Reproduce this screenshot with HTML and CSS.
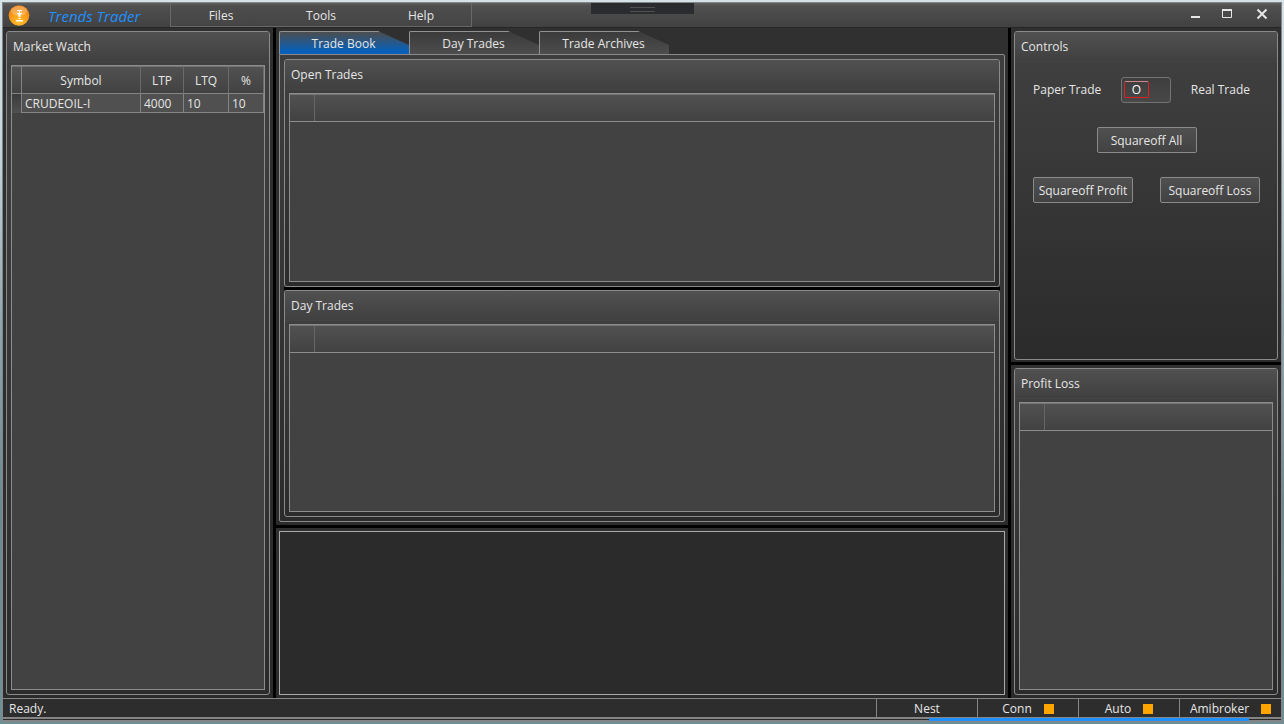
FILE: index.html
```html
<!DOCTYPE html>
<html lang="en">
<head>
<meta charset="utf-8">
<title>Trends Trader</title>
<link rel="stylesheet" href="styles.css">
</head>
<body>
<div class="window">
  <header class="titlebar">
    <svg class="logo" width="22" height="22" viewBox="0 0 22 22" aria-hidden="true">
      <defs>
        <radialGradient id="orb" cx="50%" cy="80%" r="75%">
          <stop offset="0" stop-color="#ffc02e"/>
          <stop offset="0.6" stop-color="#fb9a18"/>
          <stop offset="1" stop-color="#ee7d10"/>
        </radialGradient>
      </defs>
      <circle cx="11" cy="10.500" r="10.300" fill="url(#orb)"/>
      <ellipse cx="11" cy="6" rx="8" ry="5" fill="#fff" opacity="0.25"/>
      <path d="M9 5.500h5M11.500 5v3" fill="none" stroke="#fff"/>
      <path d="M8.500 8h6l-2 2v2h-2v-2zM10.500 13h2v1h-2zM8 15h7v1.500H8z" fill="#fff"/>
    </svg>
    <h1 class="brand">Trends Trader</h1>
    <nav class="menu">
      <button class="menu-item">Files</button>
      <button class="menu-item">Tools</button>
      <button class="menu-item">Help</button>
    </nav>
    <div class="window-buttons">
      <button class="window-button" aria-label="Minimize"><svg width="12" height="12" viewBox="0 0 12 12"><path d="M1 9h9" stroke="#e6e6e6" stroke-width="2"/></svg></button>
      <button class="window-button" aria-label="Maximize"><svg width="12" height="12" viewBox="0 0 12 12"><path d="M1.500 2v7.500h9V2z" fill="none" stroke="#e6e6e6"/><path d="M1 2h10" stroke="#e6e6e6" stroke-width="2"/></svg></button>
      <button class="window-button" aria-label="Close"><svg width="12" height="12" viewBox="0 0 12 12"><path d="M1.500 1.500l9 9M10.500 1.500l-9 9" stroke="#e6e6e6" stroke-width="2"/></svg></button>
    </div>
    <div class="grip"></div>
  </header>

  <main class="workspace">
    <div class="column">
      <section class="panel">
        <h2 class="panel-title">Market Watch</h2>
        <div class="grid-box">
          <table class="watch">
            <colgroup><col class="c-row"><col><col class="c-ltp"><col class="c-ltq"><col class="c-pct"></colgroup>
            <thead><tr><td></td><th>Symbol</th><th>LTP</th><th>LTQ</th><th>%</th></tr></thead>
            <tbody><tr><td class="row-head"></td><td>CRUDEOIL-I</td><td>4000</td><td>10</td><td>10</td></tr></tbody>
          </table>
        </div>
      </section>
    </div>

    <div class="splitter"></div>

    <div class="center">
      <div class="column book">
        <div class="tabs" role="tablist">
          <button class="tab tab-active" role="tab" aria-selected="true">Trade Book</button>
          <button class="tab" role="tab" aria-selected="false">Day Trades</button>
          <button class="tab" role="tab" aria-selected="false">Trade Archives</button>
        </div>
        <div class="tab-body" role="tabpanel">
          <section class="panel">
            <h2 class="panel-title">Open Trades</h2>
            <div class="grid-box"><div class="grid-head"></div></div>
          </section>
          <div class="splitter"></div>
          <section class="panel">
            <h2 class="panel-title">Day Trades</h2>
            <div class="grid-box"><div class="grid-head"></div></div>
          </section>
        </div>
      </div>
      <div class="splitter"></div>
      <div class="column"><div class="log"></div></div>
    </div>

    <div class="splitter"></div>

    <div class="side">
      <div class="column">
        <section class="panel">
          <h2 class="panel-title">Controls</h2>
          <div class="controls">
            <div class="mode">
              <span class="mode-label">Paper Trade</span>
              <button class="toggle" role="switch" aria-checked="false" aria-label="Real Trade"><span class="knob">O</span></button>
              <span class="mode-label">Real Trade</span>
            </div>
            <div class="actions"><button class="action">Squareoff All</button></div>
            <div class="actions">
              <button class="action">Squareoff Profit</button>
              <button class="action">Squareoff Loss</button>
            </div>
          </div>
        </section>
      </div>
      <div class="splitter"></div>
      <div class="column">
        <section class="panel">
          <h2 class="panel-title">Profit Loss</h2>
          <div class="grid-box"><div class="grid-head"></div></div>
        </section>
      </div>
    </div>
  </main>

  <footer class="statusbar">
    <span class="message">Ready.</span>
    <span class="status">Nest</span>
    <span class="status">Conn<i class="lamp"></i></span>
    <span class="status">Auto<i class="lamp"></i></span>
    <span class="status status-last">Amibroker<i class="lamp"></i></span>
  </footer>
  <div class="base"><div class="progress"></div></div>
</div>
</body>
</html>
```
FILE: styles.css
```css
* { box-sizing: border-box; }

body {
  margin: 0;
  height: 100vh;
  padding: 2px;
  background: linear-gradient(#d3e3e8 0, #c4d6de 20%, #8ea6b0 45%, #6d8791 70%, #6f8f97 100%);
  color: #e6e6e6;
  font: 12px/16px "Open Sans", "Noto Sans", sans-serif;
  overflow: hidden;
}

button { font: inherit; color: inherit; cursor: pointer; }
h1, h2 { margin: 0; font-weight: 400; }

.window {
  display: flex;
  flex-direction: column;
  height: 100%;
  border: 1px solid #858585;
  border-width: 1px 1px 0;
  background: #2e2e2e;
}

/* Title bar */
.titlebar {
  position: relative;
  display: flex;
  align-items: stretch;
  flex: none;
  height: 25px;
  border-bottom: 1px solid #262626;
  background: linear-gradient(#606060 0, #505050 3px, #414141 100%);
}
.logo { flex: none; margin: 2px 18px 0 5px; }
.brand {
  width: 122px;
  color: #1e90ff;
  font-size: 15px;
  font-style: italic;
  line-height: 26px;
}
.menu {
  display: flex;
  border: 1px solid #686868;
  border-top: 0;
  background: linear-gradient(#606060 0, #4d4d4d 3px, #454545 100%);
}
.menu-item { width: 100px; padding: 2px 0 0; border: 0; background: none; }
.window-buttons { display: flex; margin-left: auto; padding-right: 2px; }
.window-button {
  display: grid;
  place-items: center;
  width: 35px;
  padding: 0 0 3px;
  border: 0;
  background: none;
}
.window-button:first-child { width: 27px; }
.grip {
  position: absolute;
  top: 0;
  left: 46%;
  width: 103px;
  height: 11px;
  padding: 4px 39px;
  background: #2b2c30;
}
.grip::before {
  content: "";
  display: block;
  height: 3px;
  border: 1px solid #505050;
  border-width: 1px 0;
}

/* Workspace */
.workspace {
  display: grid;
  grid-template-columns: 270px 3px minmax(0, 1fr) 3px 270px;
  flex: 1;
  min-height: 0;
}
.splitter { background: #000; }
.column {
  display: flex;
  flex-direction: column;
  min-height: 0;
  padding: 3px;
  background: linear-gradient(#303030, #2b2b2b);
}
.center { display: grid; grid-template-rows: minmax(0, 1fr) 3px 170px; }
.side { display: grid; grid-template-rows: minmax(0, 1fr) 3px minmax(0, 1fr); }
.side > .column { padding-bottom: 2px; }
.side > .column:last-child { padding-bottom: 3px; }

.panel {
  display: flex;
  flex-direction: column;
  flex: 1;
  min-height: 0;
  border: 1px solid #8a8a8a;
  border-radius: 3px;
  background: linear-gradient(#414141, #2b2b2b);
}
.panel-title {
  flex: none;
  padding: 7px 6px 6px;
  border-bottom: 1px solid #444;
  border-radius: 2px 2px 0 0;
  background: linear-gradient(#515151, #404040);
  font-size: 12px;
}
.grid-box {
  flex: 1;
  min-height: 0;
  margin: 3px 4px 4px;
  border: 1px solid #8c8c8c;
  background: #424242;
}
.grid-head {
  height: 28px;
  padding-left: 24px;
  border-top: 1px solid #747474;
  border-bottom: 1px solid #8c8c8c;
  background: linear-gradient(#515151, #424242);
}
.grid-head::before {
  content: "";
  display: block;
  height: 100%;
  border-left: 1px solid #666;
}

.watch {
  width: 100%;
  border-collapse: separate;
  border-spacing: 0;
  table-layout: fixed;
}
.c-row { width: 10px; }
.c-ltp { width: 43px; }
.c-ltq { width: 45px; }
.c-pct { width: 35px; }
.watch th, .watch td {
  padding: 1px 0 0 3px;
  border: 1px solid #858585;
  border-width: 0 1px 1px 0;
  text-align: left;
}
.watch thead th, .watch thead td {
  height: 28px;
  padding: 2px 0 0;
  border-top: 1px solid #747474;
  background: linear-gradient(#515151, #424242);
  font-weight: 400;
  text-align: center;
}
.watch thead th { border-right-color: #6a6a6a; }
.watch tbody td { height: 19px; background: #505050; }
.watch tbody .row-head {
  border-bottom: 0;
  background: linear-gradient(#3b3b3b, #505050);
}

/* Tabs */
.tabs { display: flex; flex: none; }
.tab {
  width: 130px;
  height: 23px;
  padding: 2px 2px 0 0;
  border: 1px solid #929292;
  border-width: 1px 0 0 1px;
  border-radius: 2px 0 0 0;
  background: linear-gradient(#3b3b3b, #4d4d4d);
  clip-path: polygon(0 0, 99px 0, 100% 14px, 100% 100%, 0 100%);
}
.tab-active { background: linear-gradient(#4d4d4d, #0860b8 85%); }
.tab-body {
  display: grid;
  grid-template-rows: minmax(0, 1fr) 3px minmax(0, 1fr);
  flex: 1;
  min-height: 0;
  padding: 4px;
  border: 1px solid #8a8a8a;
  border-radius: 0 2px 2px 2px;
  background: linear-gradient(#3e3e3e, #2b2b2b);
}
.log { flex: 1; border: 1px solid #aaa; background: #2b2b2b; }

/* Controls */
.controls {
  display: flex;
  flex-direction: column;
  gap: 24px;
  padding: 15px 17px 15px 18px;
}
.mode, .actions { display: flex; align-items: center; }
.mode { justify-content: space-between; padding-right: 10px; }
.actions { justify-content: space-between; }
.actions:nth-child(2) { justify-content: center; }
.toggle {
  display: flex;
  width: 50px;
  height: 26px;
  padding: 3px 2px 4px;
  border: 1px solid #747474;
  border-radius: 3px;
  background: linear-gradient(#3e3e3e, #484848);
}
.knob {
  width: 25px;
  height: 17px;
  border: 1px solid #e02020;
  border-top-color: #c88;
  border-radius: 2px;
  color: #fff;
  line-height: 16px;
  text-align: center;
}
.action {
  width: 100px;
  height: 26px;
  padding: 1px 0 0;
  border: 1px solid #8a8a8a;
  border-radius: 2px;
  background: linear-gradient(#505050, #424242);
  white-space: nowrap;
}

/* Status bar */
.statusbar {
  display: flex;
  flex: none;
  height: 19px;
  border-top: 1px solid #858585;
  background: #2d2d2d;
  line-height: 20px;
}
.message { flex: 1; padding-left: 6px; }
.status {
  display: flex;
  align-items: center;
  justify-content: center;
  gap: 12px;
  width: 101px;
  padding-top: 1px;
  border-left: 1px solid #858585;
}
.status-last { width: 102px; }
.lamp { width: 10px; height: 10px; background: #ffa500; }
.base {
  flex: none;
  height: 5px;
  padding: 1px 32px 0 0;
  background: linear-gradient(#858585 2px, #2b2b2b 2px, #2b2b2b 3px, #858585 3px);
}
.progress { width: 320px; height: 3px; margin-left: auto; background: #1e90ff; }
```
